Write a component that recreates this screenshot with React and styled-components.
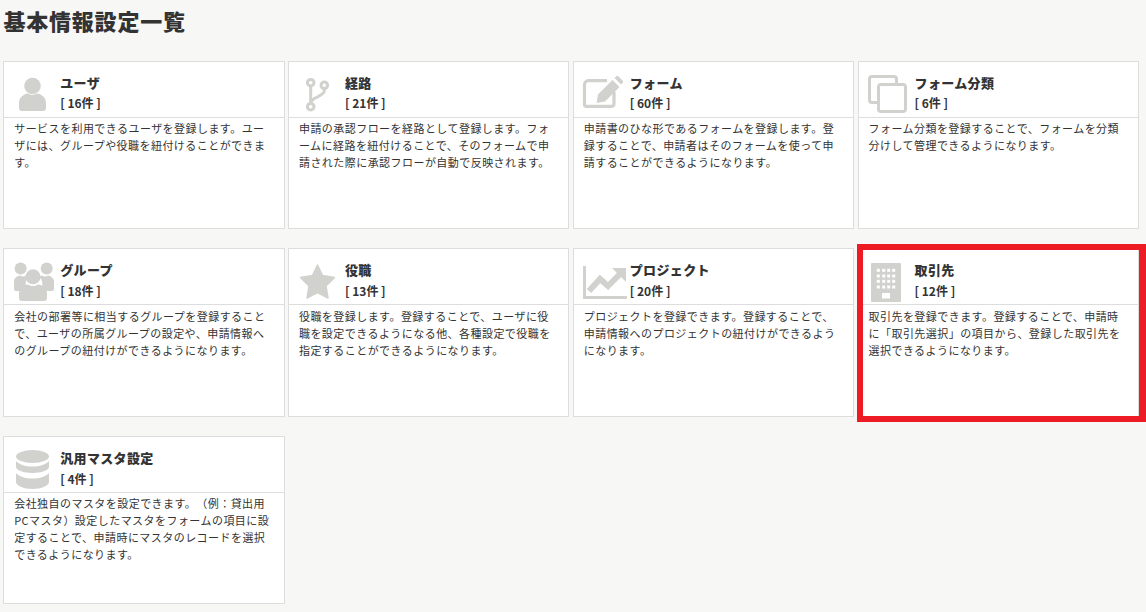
import React from "react";
import styled, { createGlobalStyle } from "styled-components";

const GlobalStyle = createGlobalStyle`
  html, body {
    margin: 0;
    background: #f7f7f5;
    font-family: "Noto Sans CJK JP", "Noto Sans", sans-serif;
    color: #333;
    text-spacing-trim: space-all;
  }
`;

const Page = styled.div`
  padding: 8px 0 8px 3.4px;
`;

const Heading = styled.h1`
  margin: 0 0 27.6px;
  height: 25px;
  font-size: 22px;
  font-weight: 900;
  line-height: 25px;
  letter-spacing: 0.8px;
`;

const Grid = styled.div`
  display: grid;
  grid-template-columns: repeat(4, 281.2px);
  grid-auto-rows: 168.6px;
  column-gap: 3.6px;
  row-gap: 19px;
`;

const Card = styled.section`
  position: relative;
  box-sizing: border-box;
  background: #fff;
  border: 1px solid #ddd;

  ${(p) =>
    p.$marked &&
    `
    &::after {
      content: "";
      position: absolute;
      top: -5px;
      left: -2px;
      right: -8px;
      bottom: -6px;
      border: 6px solid #ed1c24;
      border-right-width: 7px;
      pointer-events: none;
    }
  `}
`;

const CardHeader = styled.header`
  display: flex;
  box-sizing: border-box;
  height: 56px;
  padding-top: 10px;
  border-bottom: 1px solid #ddd;
`;

const IconSlot = styled.svg`
  flex: 0 0 55.8px;
  width: 55.8px;
  height: 45px;
  fill: #d1d2cd;
  stroke: none;
`;

const Heads = styled.div`
  padding-top: 1px;
`;

const Title = styled.h2`
  margin: 0;
  font-size: 13px;
  font-weight: 900;
  line-height: 20px;
  letter-spacing: 0.35px;
`;

const Count = styled.div`
  margin-top: 0.8px;
  font-size: 12px;
  font-weight: 700;
  line-height: 20px;
`;

const Description = styled.p`
  margin: 0;
  padding: 2.4px 11.2px 0 9.8px;
  font-size: 11px;
  line-height: 17px;
  letter-spacing: 0.45px;
`;

const Line = styled.g`
  fill: none;
  stroke: #d1d2cd;
  stroke-width: ${(p) => p.$w || 3}px;
`;

const UserIcon = () => (
  <IconSlot viewBox="0 0 55.8 45">
    <circle cx="28.5" cy="14" r="8.300" />
    <path d="M15 36v-5c0-6 5-9 9-9.500q4.500 3 9 0c4 .5 9 3.500 9 9.500v5a3 3 0 0 1-3 3H18a3 3 0 0 1-3-3z" />
  </IconSlot>
);

const BranchIcon = () => (
  <IconSlot viewBox="0 0 55.8 45">
    <Line>
      <circle cx="21.700" cy="10.700" r="3.300" />
      <circle cx="21.700" cy="34.700" r="3.300" />
      <circle cx="35.300" cy="13.300" r="3.300" />
      <path d="M21.700 14v17.400M35.300 16.600v2c0 6.500-13.600 6-13.600 12.800" />
    </Line>
  </IconSlot>
);

const EditIcon = () => (
  <IconSlot viewBox="0 0 55.8 45">
    <Line $w={3.200}>
      <path d="M33 8.700H14.500a4 4 0 0 0-4 4v19.600a2 2 0 0 0 2 2h25a2.500 2.500 0 0 0 2.500-2.500V20" />
    </Line>
    <path d="M22.500 31l1.500-8.500L38.500 8l7 7L31 29.500zM40.500 6l1.800-1.800a1.500 1.500 0 0 1 2 0l4.500 4.500a1.500 1.500 0 0 1 0 2L47 12.500z" />
  </IconSlot>
);

const CopyIcon = () => (
  <IconSlot viewBox="0 0 55.8 45">
    <Line>
      <rect x="10.500" y="4.500" width="27" height="26" rx="2.500" />
      <rect x="19.500" y="12.500" width="27" height="27" rx="2.500" fill="#fff" />
    </Line>
  </IconSlot>
);

const GroupIcon = () => (
  <IconSlot viewBox="0 0 55.8 45">
    <circle cx="16.600" cy="9.500" r="6" />
    <circle cx="42.700" cy="9.500" r="6" />
    <path d="M10 28v-5c0-4 3-6 6-6.500q3 2 6 0c1 .2 2 .6 3 1.200a10 10 0 0 0-3 10.300c-2 .8-3.500 2-4.500 4H12a2 2 0 0 1-2-2z" />
    <path d="M50 28v-5c0-4-3-6-6-6.500q-3 2-6 0c-1 .2-2 .6-3 1.200a10 10 0 0 1 3 10.300c2 .8 3.500 2 4.500 4H48a2 2 0 0 0 2-2z" />
    <circle cx="29" cy="17.700" r="7.500" />
    <path d="M15 39v-5c0-5 4.500-8 9-8.500q5 3 10 0c4.500 .5 9 3.500 9 8.500v5a3 3 0 0 1-3 3H18a3 3 0 0 1-3-3z" />
  </IconSlot>
);

const StarIcon = () => (
  <IconSlot viewBox="0 0 55.8 45">
    <polygon
      points="28.500,6 33.500,16.500 45.500,18.500 37,27 39,39 28.500,33.500 18,39 20,27 11.500,18.500 23.500,16.500"
      stroke="#d1d2cd"
      strokeWidth="1.500"
      strokeLinejoin="round"
    />
  </IconSlot>
);

const ChartIcon = () => (
  <IconSlot viewBox="0 0 55.8 45">
    <Line>
      <path d="M10.500 7v31.500H53" />
    </Line>
    <Line $w={6}>
      <path d="M15 32l11-12 8 7 13-13" />
    </Line>
    <polygon points="38,9 52,9 52,23" />
  </IconSlot>
);

const BuildingIcon = () => (
  <IconSlot viewBox="0 0 55.8 45">
    <rect x="12" y="4" width="30" height="39" rx="1" />
    {[11.300, 17, 22.300, 28].map((y) =>
      [19.300, 24.700, 29.700, 34.700].map((x) => (
        <rect key={`${x}-${y}`} x={x - 1.500} y={y - 1.500} width="3" height="3" fill="#fff" />
      ))
    )}
    <rect x="23" y="34" width="8" height="5.500" fill="#fff" />
  </IconSlot>
);

const DatabaseIcon = () => (
  <IconSlot viewBox="0 0 55.8 45">
    <ellipse cx="28.500" cy="9.500" rx="16.500" ry="6.500" />
    <path d="M12 14v6c0 3 7.400 6 16.500 6s16.500-3 16.500-6v-6c-3 3.500-9 5.500-16.500 5.500S15 17.500 12 14z" />
    <path d="M12 26v9c0 3.500 7.400 7 16.500 7s16.500-3.500 16.500-7v-9c-3 3.500-9 5.500-16.500 5.500S15 29.500 12 26z" />
  </IconSlot>
);

const items = [
  {
    icon: <UserIcon />,
    title: "ユーザ",
    count: "[ 16件 ]",
    text: "サービスを利用できるユーザを登録します。ユーザには、グループや役職を紐付けることができます。",
  },
  {
    icon: <BranchIcon />,
    title: "経路",
    count: "[ 21件 ]",
    text: "申請の承認フローを経路として登録します。フォームに経路を紐付けることで、そのフォームで申請された際に承認フローが自動で反映されます。",
  },
  {
    icon: <EditIcon />,
    title: "フォーム",
    count: "[ 60件 ]",
    text: "申請書のひな形であるフォームを登録します。登録することで、申請者はそのフォームを使って申請することができるようになります。",
  },
  {
    icon: <CopyIcon />,
    title: "フォーム分類",
    count: "[ 6件 ]",
    text: "フォーム分類を登録することで、フォームを分類分けして管理できるようになります。",
  },
  {
    icon: <GroupIcon />,
    title: "グループ",
    count: "[ 18件 ]",
    text: "会社の部署等に相当するグループを登録することで、ユーザの所属グループの設定や、申請情報へのグループの紐付けができるようになります。",
  },
  {
    icon: <StarIcon />,
    title: "役職",
    count: "[ 13件 ]",
    text: "役職を登録します。登録することで、ユーザに役職を設定できるようになる他、各種設定で役職を指定することができるようになります。",
  },
  {
    icon: <ChartIcon />,
    title: "プロジェクト",
    count: "[ 20件 ]",
    text: "プロジェクトを登録できます。登録することで、申請情報へのプロジェクトの紐付けができるようになります。",
  },
  {
    icon: <BuildingIcon />,
    title: "取引先",
    count: "[ 12件 ]",
    text: "取引先を登録できます。登録することで、申請時に「取引先選択」の項目から、登録した取引先を選択できるようになります。",
    marked: true,
  },
  {
    icon: <DatabaseIcon />,
    title: "汎用マスタ設定",
    count: "[ 4件 ]",
    text: "会社独自のマスタを設定できます。（例：貸出用PCマスタ）設定したマスタをフォームの項目に設定することで、申請時にマスタのレコードを選択できるようになります。",
  },
];

export default function App() {
  return (
    <Page>
      <GlobalStyle />
      <Heading>基本情報設定一覧</Heading>
      <Grid>
        {items.map((item) => (
          <Card key={item.title} $marked={item.marked}>
            <CardHeader>
              {item.icon}
              <Heads>
                <Title>{item.title}</Title>
                <Count>{item.count}</Count>
              </Heads>
            </CardHeader>
            <Description>{item.text}</Description>
          </Card>
        ))}
      </Grid>
    </Page>
  );
}
